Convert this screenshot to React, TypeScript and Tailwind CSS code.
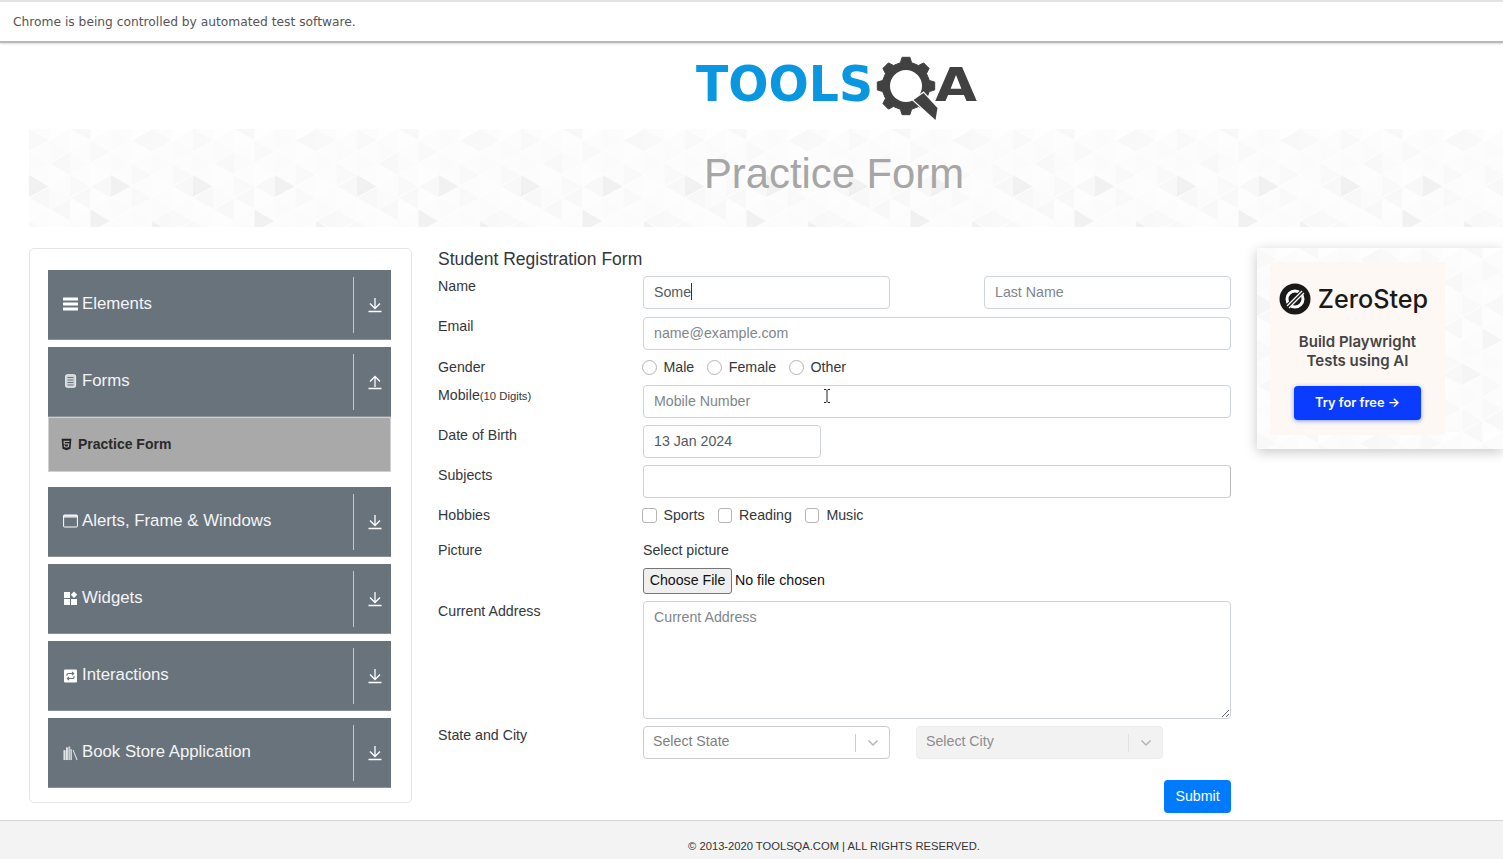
import React from "react";

const font = "font-['Liberation_Sans',Arial,sans-serif]";

// triangle texture used behind the banner and the ad
function Triangles({ id, w, h, soft }: { id: string; w: number; h: number; soft?: boolean }) {
  const cw = 20.5;
  const rh = 23;
  const tris: { p: string; f: string }[] = [];
  const dark: Record<string, boolean> = { "0,2": true, "4,2": true, "3,3": true, "2,5": true, "6,4": true };
  for (let c = 0; c < 8; c++) {
    for (let r = 0; r < 10; r++) {
      const x = c * cw;
      const y = r * rh + (c % 2 ? rh / 2 : 0);
      const seed = (c * 37 + r * 91 + c * r * 13) % 11;
      const f = dark[`${c},${r}`] ? (soft ? "#f5f5f5" : "#f1f1f1") : seed < 3 ? "#f9f9f9" : seed < 7 ? "#fbfbfb" : "#fdfdfd";
      tris.push({ p: `${x},${y} ${x},${y + rh - 1} ${x + cw - 1},${y + rh / 2}`, f });
      const g = (seed + 4) % 11 < 3 ? "#f8f8f8" : "#fcfcfc";
      tris.push({ p: `${x + cw},${y - rh / 2 + 0.5} ${x + cw},${y + rh / 2 - 0.5} ${x + 1},${y}`, f: g });
    }
  }
  return (
    <svg width={w} height={h} className="absolute inset-0">
      <defs>
        <pattern id={id} width={cw * 8} height={rh * 8} patternUnits="userSpaceOnUse">
          <rect width={cw * 8} height={rh * 8} fill="#fefefe" />
          {tris.map((t, i) => (
            <polygon key={i} points={t.p} fill={t.f} />
          ))}
        </pattern>
      </defs>
      <rect width={w} height={h} fill={`url(#${id})`} />
    </svg>
  );
}

function gearPath(cx: number, cy: number, ro: number, ri: number, teeth: number) {
  let d = "";
  for (let i = 0; i < teeth; i++) {
    const a = (i * 2 * Math.PI) / teeth - Math.PI / 2;
    const s = (2 * Math.PI) / teeth;
    const pts = [
      [ri, a - s * 0.3],
      [ro, a - s * 0.17],
      [ro, a + s * 0.17],
      [ri, a + s * 0.3],
    ];
    pts.forEach(([r, t], j) => {
      d += `${i === 0 && j === 0 ? "M" : "L"}${(cx + r * Math.cos(t)).toFixed(1)} ${(cy + r * Math.sin(t)).toFixed(1)} `;
    });
  }
  return d + "Z";
}

function Logo() {
  return (
    <svg width="290" height="68" viewBox="0 0 290 68">
      <text x="3" y="46" fontFamily="DejaVu Sans" fontWeight="700" fontSize="49" fill="#0b97df" textLength="177" lengthAdjust="spacingAndGlyphs">
        TOOLS
      </text>
      <path d={gearPath(213, 31, 29, 24, 8)} fill="#414141" strokeLinejoin="round" stroke="#414141" strokeWidth="1" />
      <circle cx="213" cy="31" r="16" fill="#fff" />
      <polygon
        points="230.500,38 244.500,53 242.500,65 220.500,45"
        fill="#414141"
        stroke="#fff"
        strokeWidth="2.500"
        paintOrder="stroke"
      />
      <text x="242" y="46" fontFamily="DejaVu Sans" fontWeight="700" fontSize="47" fill="#414141" textLength="42" lengthAdjust="spacingAndGlyphs">
        A
      </text>
    </svg>
  );
}

function ArrowIcon({ up }: { up?: boolean }) {
  return (
    <svg width="14" height="16" viewBox="0 0 14 16" fill="none" stroke="#fff" strokeWidth="1.3">
      {up ? (
        <path d="M7 13V3M2 7.5L7 2.5l5 5M0.5 14.5h13" />
      ) : (
        <path d="M7 1v10M2 6.5l5 5 5-5M0.5 14.5h13" />
      )}
    </svg>
  );
}

const icons: Record<string, React.ReactNode> = {
  Elements: (
    <svg width="15" height="14" viewBox="0 0 15 14" fill="#fff">
      <rect y="0.5" width="15" height="3" rx="0.5" />
      <rect y="5.5" width="15" height="3" rx="0.5" />
      <rect y="10.5" width="15" height="3" rx="0.5" />
    </svg>
  ),
  Forms: (
    <svg width="15" height="14" viewBox="0 0 15 14" fill="none">
      <rect x="2.6" y="0.7" width="10" height="12.6" rx="1.5" fill="#cfd3d6" stroke="#fff" strokeWidth="0.8" />
      <path d="M4.5 3.5h6M4.5 6h6M4.5 8.5h6M4.5 11h6" stroke="#69737c" strokeWidth="1" />
    </svg>
  ),
  Alerts: (
    <svg width="15" height="14" viewBox="0 0 15 14" fill="none">
      <rect x="0.6" y="1" width="13.8" height="12" rx="0.8" stroke="#fff" strokeWidth="1" />
      <rect x="0.6" y="1" width="13.8" height="2.6" fill="#fff" opacity="0.8" />
    </svg>
  ),
  Widgets: (
    <svg width="15" height="14" viewBox="0 0 15 14" fill="#fff">
      <rect x="1" y="1" width="6" height="6" />
      <rect x="1" y="8" width="6" height="6" />
      <rect x="8" y="8" width="6" height="6" />
      <polygon points="11,0.500 14.200,3.700 11,7 7.800,3.700" />
    </svg>
  ),
  Interactions: (
    <svg width="15" height="14" viewBox="0 0 15 14" className="mt-[2px]">
      <rect x="1" y="0.5" width="13" height="13" rx="1" fill="#fff" />
      <path
        d="M4 6.800V5.800c0-.8.6-1.300 1.300-1.300h5M9 2.900l1.600 1.600L9 6.100M11 7.200v1c0 .8-.6 1.300-1.300 1.300h-5M6 7.900L4.400 9.500 6 11.100"
        fill="none"
        stroke="#69737c"
        strokeWidth="1.200"
      />
    </svg>
  ),
  Book: (
    <svg width="16" height="16" viewBox="0 0 16 16" fill="#e4e6e8" className="mt-[2px]">
      <rect x="0.500" y="5" width="2.200" height="10.500" />
      <rect x="3.200" y="2" width="2" height="13.500" />
      <rect x="5.700" y="1" width="2" height="14.500" opacity="0.8" />
      <rect x="8" y="4" width="1.400" height="11.500" />
      <polygon points="10.300,5 11.300,4.700 15.500,15.300 14.500,15.700" />
    </svg>
  ),
};

function MenuItem({ icon, label, up }: { icon: string; label: string; up?: boolean }) {
  return (
    <div className="flex h-[70px] items-center border-b border-[#8a9198] bg-[#69737c] pl-[15px] text-[#f4f5f6]">
      <div className="flex flex-1 items-center gap-[4px] pb-[2px]">
        <span className="flex w-[15px] justify-center">{icons[icon]}</span>
        <span className="text-[16.800px] leading-[24px]">{label}</span>
      </div>
      <div className="h-[56px] w-px bg-[#c3c7cb]" />
      <div className="flex w-[37px] justify-center pl-[5px]">
        <ArrowIcon up={up} />
      </div>
    </div>
  );
}

function Sidebar() {
  return (
    <aside className="h-[555px] w-[383px] shrink-0 rounded-[5px] border border-[#e4e4e4] pl-[18px] pr-[20px] pt-[21px]">
      <div className="flex flex-col gap-[7px]">
        <MenuItem icon="Elements" label="Elements" />
        <div className="mb-[8px]">
          <MenuItem icon="Forms" label="Forms" up />
          <div className="flex h-[55px] items-center gap-[6px] border border-[#cfcfcf] bg-[#a9a9a9] pl-[12px] text-[14px] font-bold text-[#2a2a2a]">
            <svg width="11" height="13" viewBox="0 0 384 512" fill="#222">
              <path d="M0 32l34.9 395.8L191.500 480l157.600-52.200L384 32H0zm308.200 127.900H124.400l4.100 49.400h175.600l-13.600 148.400-97.900 27v.3h-1.100l-98.700-27.300-6-75.800h47.700L138 320l53.500 14.500 53.700-14.500 6-62.200H84.300L71.500 112.200h241.100l-4.400 47.700z" />
            </svg>
            Practice Form
          </div>
        </div>
        <MenuItem icon="Alerts" label="Alerts, Frame & Windows" />
        <MenuItem icon="Widgets" label="Widgets" />
        <MenuItem icon="Interactions" label="Interactions" />
        <MenuItem icon="Book" label="Book Store Application" />
      </div>
    </aside>
  );
}

const inputCls =
  "h-[33px] rounded-[4px] border border-[#ced4da] bg-white pb-[2px] pl-[10px] pr-[10px] text-[14.200px] text-[#545b62] outline-none placeholder:text-[#80868c]";

function Label({ children, className = "" }: { children: React.ReactNode; className?: string }) {
  return <div className={`w-[205px] shrink-0 text-[14.200px] leading-[20px] text-[#33373b] ${className}`}>{children}</div>;
}

function Choice({ label, round, className }: { label: string; round?: boolean; className: string }) {
  return (
    <div className={`flex items-center gap-[7px] text-[14.200px] text-[#33373b] ${className}`}>
      <span className={`h-[14.500px] w-[14.500px] border border-[#b5b5b5] bg-white ${round ? "rounded-full" : "rounded-[3px]"}`} />
      {label}
    </div>
  );
}

function Chevron() {
  return (
    <svg width="12" height="8" viewBox="0 0 12 8" fill="none" stroke="#b5b5b5" strokeWidth="1.500">
      <path d="M1.500 1.500L6 6l4.500-4.500" />
    </svg>
  );
}

function SelectBox({ label, disabled }: { label: string; disabled?: boolean }) {
  return (
    <div
      className={`flex h-[33px] w-[247px] items-center rounded-[4px] border pl-[9px] text-[14.200px] ${
        disabled ? "border-[#ececec] bg-[#f2f2f2] text-[#8d8d8d]" : "border-[#cccccc] bg-white text-[#7f7f7f]"
      }`}
    >
      <span className="flex-1 pb-[1px]">{label}</span>
      <div className={`h-[18px] w-px ${disabled ? "bg-[#e2e2e2]" : "bg-[#cccccc]"}`} />
      <div className="flex w-[33px] justify-center">
        <Chevron />
      </div>
    </div>
  );
}

function PracticeForm() {
  return (
    <main className="ml-[26px] w-[793px] shrink-0">
      <h5 className="h-[28px] text-[17.500px] leading-[22px] text-[#33373b]">Student Registration Form</h5>
      <div className="mb-[8px] flex">
        <Label>Name</Label>
        <div className="relative">
          <input readOnly defaultValue="Some" className={`${inputCls} w-[247px]`} />
          <span className="absolute left-[48px] top-[7px] h-[17px] w-px bg-[#333]" />
        </div>
        <input readOnly placeholder="Last Name" className={`${inputCls} ml-[94px] w-[247px]`} />
      </div>
      <div className="flex">
        <Label className="-mt-[1px]">Email</Label>
        <input readOnly placeholder="name@example.com" className={`${inputCls} w-[588px]`} />
      </div>
      <div className="flex h-[35px] items-center">
        <Label className="pb-[1px]">Gender</Label>
        <Choice round label="Male" className="-ml-[1px] mr-[13px]" />
        <Choice round label="Female" className="mr-[13px]" />
        <Choice round label="Other" className="" />
      </div>
      <div className="relative mb-[7px] flex">
        <Label>
          Mobile<span className="text-[11.300px]">(10 Digits)</span>
        </Label>
        <input readOnly placeholder="Mobile Number" className={`${inputCls} w-[588px]`} />
        <svg width="8" height="14" viewBox="0 0 8 14" fill="none" stroke="#222" strokeWidth="1" className="absolute left-[385px] top-[4px]">
          <path d="M1 .5h2l1 1 1-1h2M4 1.500v11M1 13.500h2l1-1 1 1h2" />
        </svg>
      </div>
      <div className="mb-[7px] flex">
        <Label>Date of Birth</Label>
        <input readOnly defaultValue="13 Jan 2024" className={`${inputCls} w-[178px]`} />
      </div>
      <div className="flex">
        <Label>Subjects</Label>
        <input readOnly className={`${inputCls} w-[588px] border-r-[#b8b8b8]`} />
      </div>
      <div className="flex h-[35px] items-center">
        <Label className="pb-[2px]">Hobbies</Label>
        <Choice label="Sports" className="-ml-[1px] mr-[13px]" />
        <Choice label="Reading" className="mr-[13px]" />
        <Choice label="Music" className="" />
      </div>
      <div className="flex pt-[7px]">
        <Label>Picture</Label>
        <div className="text-[14.200px] text-[#33373b]">
          <div className="h-[28px] leading-[20px]">Select picture</div>
          <div className="flex items-center gap-[3px]">
            <button className="h-[26px] w-[89px] rounded-[3px] border border-[#767676] bg-[#efefef] text-[14.200px] text-[#111]">
              Choose File
            </button>
            <span className="text-[#111]">No file chosen</span>
          </div>
        </div>
      </div>
      <div className="mb-[7px] mt-[7px] flex">
        <Label>Current Address</Label>
        <textarea readOnly placeholder="Current Address" className={`${inputCls} h-[118px] w-[588px] pt-[5px]`} />
      </div>
      <div className="flex">
        <Label className="-mt-[1px]">State and City</Label>
        <SelectBox label="Select State" />
        <div className="ml-[26px]">
          <SelectBox disabled label="Select City" />
        </div>
      </div>
      <div className="mt-[21px] flex w-[793px] justify-end">
        <button className="h-[33px] w-[67px] rounded-[4px] bg-[#007bff] text-[14.200px] text-white">Submit</button>
      </div>
    </main>
  );
}

function Ad() {
  return (
    <div className="relative ml-[26px] h-[201px] w-[246px] shrink-0 shadow-[0_3px_12px_rgba(0,0,0,0.22)]">
      <Triangles id="ad" w={246} h={201} soft />
      <div className="absolute left-[13px] top-[14px] flex h-[173px] w-[175px] flex-col items-center bg-[#fdf8f3] font-['Inter',sans-serif]">
        <div className="mt-[21px] flex items-center gap-[7px] pr-[8px]">
          <svg width="32" height="32" viewBox="0 0 32 32">
            <circle cx="16" cy="16" r="15.500" fill="#1a1a1a" />
            <circle cx="16" cy="16" r="8" fill="none" stroke="#fff" strokeWidth="3" />
            <path d="M6 26L26 6" stroke="#1a1a1a" strokeWidth="5" />
            <path d="M8 23L23 8M10 25L25 10" stroke="#fff" strokeWidth="1.300" />
          </svg>
          <span className="text-[25.200px] font-medium leading-[32px] text-[#1a1a1a]">ZeroStep</span>
        </div>
        <div className="mt-[18px] text-center text-[15px] font-semibold leading-[18.500px] text-[#444]">
          Build Playwright
          <br />
          Tests using AI
        </div>
        <button className="mt-[16px] h-[34px] w-[127px] rounded-[4px] bg-[#0a3cff] text-[12.800px] font-semibold text-white shadow-[0_1px_4px_rgba(10,60,255,0.5)]">
          Try for free →
        </button>
      </div>
    </div>
  );
}

export default function App() {
  return (
    <div className={`flex h-[859px] w-[1503px] flex-col overflow-hidden bg-white ${font}`}>
      <div className="flex h-[43px] shrink-0 items-center border-b-2 border-t-2 border-b-[#b9b9b9] border-t-[#e2e2e2] pl-[13px] pt-[2px] font-['DejaVu_Sans',sans-serif] text-[12.250px] text-[#555] shadow-[0_1px_2px_rgba(0,0,0,0.15)]">
        Chrome is being controlled by automated test software.
      </div>
      <div className="flex h-[86px] shrink-0 justify-center pl-[172px] pt-[12px]">
        <Logo />
      </div>
      <div className="relative ml-[29px] flex h-[98px] shrink-0 items-center justify-center pb-[7px]">
        <Triangles id="banner" w={1474} h={98} />
        <h1 className="relative ml-[136px] text-[41.800px] text-[#a6a6a6]">Practice Form</h1>
      </div>
      <div className="ml-[29px] mt-[21px] flex flex-1">
        <Sidebar />
        <PracticeForm />
        <Ad />
      </div>
      <footer className="flex h-[39px] shrink-0 items-center justify-center border-t border-[#d4d4d4] bg-[#f3f3f3] pl-[165px] pt-[13px] text-[11.200px] text-[#333]">
        © 2013-2020 TOOLSQA.COM | ALL RIGHTS RESERVED.
      </footer>
    </div>
  );
}
